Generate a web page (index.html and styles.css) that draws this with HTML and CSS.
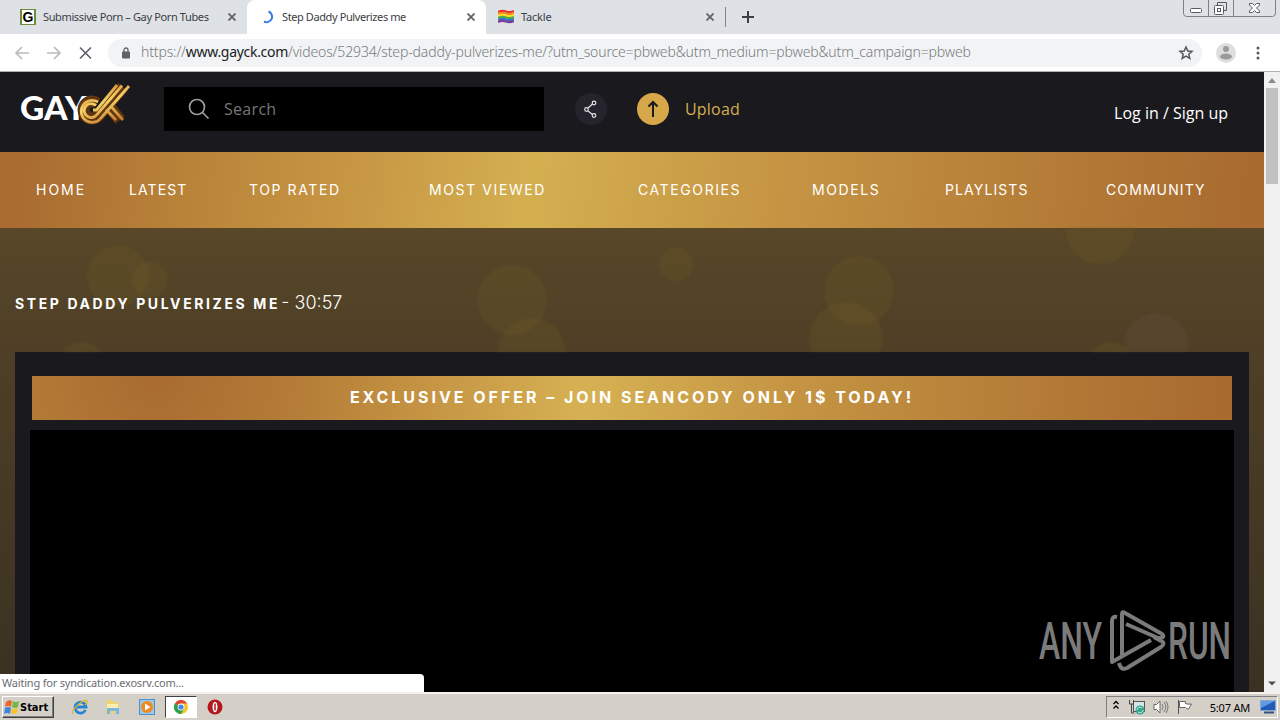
FILE: index.html
```html
<!DOCTYPE html>
<html lang="en">
<head>
    <meta charset="UTF-8">
    <meta name="viewport" content="width=device-width, initial-scale=1.0">
    <title>Step Daddy Pulverizes me</title>
    <link rel="stylesheet" href="styles.css">
</head>
<body>
    <div class="desktop">
        <!-- Tabs -->
        <div class="tabstrip">
            <div class="tab tab-first">
                <svg class="favicon" width="16" height="16" viewBox="0 0 16 16"><rect width="16" height="16" fill="#6f8c3c"/><rect x="2" y="1" width="12" height="14" fill="#fff"/><text x="8" y="13" text-anchor="middle" class="favicon-letter">G</text></svg>
                <span class="tab-title title-one">Submissive Porn – Gay Porn Tubes</span>
                <svg class="tab-close" width="8" height="8" viewBox="0 0 8 8"><path d="M0.5 0.5l7 7M7.5 0.5l-7 7"/></svg>
            </div>
            <div class="tab tab-active">
                <svg class="favicon" width="16" height="16" viewBox="0 0 16 16"><path d="M8.500 2.500A5.500 5.500 0 1 1 4 12.500" fill="none" stroke="#3b78e0" stroke-width="2"/></svg>
                <span class="tab-title title-two">Step Daddy Pulverizes me</span>
                <svg class="tab-close" width="8" height="8" viewBox="0 0 8 8"><path d="M0.5 0.5l7 7M7.5 0.5l-7 7"/></svg>
            </div>
            <div class="tab tab-last">
                <svg class="favicon" width="16" height="16" viewBox="0 0 16 16"><g fill="none" stroke-width="2.2"><path d="M0 3q4-2 8-.5t8-.5" stroke="#e8322c"/><path d="M0 5q4-2 8-.5t8-.5" stroke="#f58a1f"/><path d="M0 7q4-2 8-.5t8-.5" stroke="#f9dc2c"/><path d="M0 9q4-2 8-.5t8-.5" stroke="#4caf3d"/><path d="M0 11q4-2 8-.5t8-.5" stroke="#3a6fd0"/><path d="M0 13q4-2 8-.5t8-.5" stroke="#7a3c98"/></g></svg>
                <span class="tab-title title-three">Tackle</span>
                <svg class="tab-close" width="8" height="8" viewBox="0 0 8 8"><path d="M0.5 0.5l7 7M7.5 0.5l-7 7"/></svg>
            </div>
            <div class="tab-separator"></div>
            <svg class="new-tab" width="12" height="12" viewBox="0 0 12 12"><path d="M6 0v12M0 6h12" stroke="#3c4043" stroke-width="2"/></svg>
            <svg class="window-buttons" width="94" height="18" viewBox="0 0 94 18" fill="none">
                <path d="M.5 0v13q0 3.500 3 3.500h86q3 0 3-3.500V0M25.500 0v16M50.500 0v16" stroke="#7d818b"/>
                <rect x="7.500" y="8.500" width="11" height="4" rx="1" fill="#fff" stroke="#555b66"/>
                <path d="M34.500 5V2.500h9v8H41" stroke="#555b66"/>
                <rect x="31.500" y="5.500" width="9" height="9" rx="1" fill="#fff" stroke="#555b66"/><rect x="34.500" y="8.500" width="3" height="3" stroke="#555b66"/>
                <path d="M66.500 3.500h3l2 2 2-2h3v1.500l-3 3 3 3v1.500h-3l-2-2-2 2h-3v-1.500l3-3-3-3z" fill="#fff" stroke="#555b66"/>
            </svg>
        </div>

        <!-- Address bar -->
        <div class="toolbar">
            <svg class="nav-icon" width="84" height="18" viewBox="0 0 84 18" fill="none" stroke-width="1.700">
                <path d="M15 9H2M8 3L2 9l6 6M33 9h13M40 3l6 6-6 6" stroke="#b9bbbe"/>
                <path d="M66 3.500l11 11M77 3.500l-11 11" stroke="#5f6368"/>
            </svg>
            <div class="omnibox">
                <svg width="8" height="12" viewBox="0 0 8 12"><path d="M2 5V3a2 2 0 0 1 4 0v2" fill="none" stroke="#5f6368" stroke-width="1.300"/><rect y="4.500" width="8" height="7" rx="1" fill="#5f6368"/></svg>
                <span class="url">https://<b>www.gayck.com</b>/videos/52934/step-daddy-pulverizes-me/?utm_source=pbweb&amp;utm_medium=pbweb&amp;utm_campaign=pbweb</span>
                <svg class="star" width="16" height="16" viewBox="0 0 16 16"><path d="M8 2l1.800 4 4.200.4-3.200 2.800 1 4.200L8 11.200l-3.800 2.200 1-4.200L2 6.400 6.200 6z" fill="none" stroke="#54585d" stroke-width="1.500"/></svg>
            </div>
            <svg class="avatar" width="20" height="20" viewBox="0 0 20 20"><circle cx="10" cy="10" r="10" fill="#dedede"/><circle cx="10" cy="6" r="3" fill="#9a9a9a"/><ellipse cx="10" cy="13.500" rx="6" ry="3" fill="#9a9a9a"/></svg>
            <svg class="kebab" width="4" height="14" viewBox="0 0 4 14" fill="#54585d"><circle cx="2" cy="2" r="1.500"/><circle cx="2" cy="7" r="1.500"/><circle cx="2" cy="12" r="1.500"/></svg>
        </div>

        <div class="viewport">
            <div class="page">
                <header class="header">
                    <svg class="logo" width="112" height="42" viewBox="0 0 112 42">
                        <defs>
                            <linearGradient id="gold" gradientUnits="userSpaceOnUse" x1="80" y1="0" x2="95" y2="40">
                                <stop offset="0" stop-color="#c8782a"/>
                                <stop offset=".45" stop-color="#f6d267"/>
                                <stop offset="1" stop-color="#c5762a"/>
                            </linearGradient>
                        </defs>
                        <text x="0" y="37" textLength="67" lengthAdjust="spacingAndGlyphs" class="logo-text">GAY</text>
                        <g fill="none" stroke="#5f3411" stroke-width="12">
                            <path d="M78 33a8.500 8.500 0 1 1-1-13M78 33L103 4M88 22l12 15"/>
                        </g>
                        <g fill="none" stroke="url(#gold)" stroke-width="2.800">
                            <path d="M78 19A11 11 0 1 0 81 35L109 3"/>
                            <path d="M76 22.500A7 7 0 1 0 77 31.500L102 2.500"/>
                            <path d="M73 27h3.500L97 2"/>
                            <path d="M91 23.500L103 37M86 26.500L96 37"/>
                        </g>
                    </svg>
                    <div class="search">
                        <svg width="22" height="22" viewBox="0 0 22 22" fill="none" stroke="#9c9c9c" stroke-width="1.700"><circle cx="9" cy="9" r="7.500"/><path d="M14.500 14.500L20.500 20.500"/></svg>
                        <span>Search</span>
                    </div>
                    <svg class="share" width="32" height="32" viewBox="0 0 32 32"><circle cx="16" cy="16" r="16" fill="#25242d"/><g fill="none" stroke="#e4e4e6" stroke-width="1.200"><path d="M13 15l4.500-4M13 18l4.500 3.500"/><circle cx="11.500" cy="16.500" r="1.800"/><circle cx="19" cy="10" r="1.800"/><circle cx="19" cy="22.500" r="1.800"/></g></svg>
                    <a class="upload">
                        <svg width="32" height="32" viewBox="0 0 32 32"><circle cx="16" cy="16" r="16" fill="#d6a849"/><path d="M16 24V9M11.500 13.500L16 9l4.500 4.500" fill="none" stroke="#1b1a1e" stroke-width="2"/></svg>
                        <span>Upload</span>
                    </a>
                    <a class="login">Log in / Sign up</a>
                </header>

                <nav class="menu">
                    <a class="menu-home">HOME</a>
                    <a>LATEST</a>
                    <a class="menu-wide">TOP RATED</a>
                    <a class="menu-wide">MOST VIEWED</a>
                    <a class="menu-wide">CATEGORIES</a>
                    <a class="menu-wide">MODELS</a>
                    <a>PLAYLISTS</a>
                    <a>COMMUNITY</a>
                </nav>

                <main class="content">
                    <svg class="bokeh" width="1264" height="124" viewBox="0 0 1264 124">
                        <g fill="#6b5824" fill-opacity=".32">
                            <circle cx="118" cy="48" r="31"/><circle cx="150" cy="52" r="18"/>
                            <circle cx="512" cy="72" r="35"/><circle cx="532" cy="124" r="34"/>
                            <circle cx="676" cy="36" r="17"/><circle cx="859" cy="63" r="35"/>
                            <circle cx="846" cy="111" r="37"/><circle cx="1100" cy="2" r="34"/>
                            <circle cx="82" cy="138" r="24"/><circle cx="1110" cy="136" r="22"/>
                        </g>
                        <circle cx="1156" cy="118" r="33" fill="#68513a" fill-opacity=".3"/>
                    </svg>
                    <h1 class="video-title"><strong>STEP DADDY PULVERIZES ME</strong> <span class="duration">- 30:57</span></h1>
                    <div class="player-box">
                        <a class="offer"><span>EXCLUSIVE OFFER – JOIN SEANCODY ONLY 1$ TODAY!</span></a>
                        <div class="video"></div>
                    </div>
                </main>

                <div class="status">Waiting for syndication.exosrv.com...</div>
                <svg class="watermark" width="196" height="64" viewBox="0 0 196 64">
                    <g class="watermark-text">
                        <text x="1" y="50" textLength="63" lengthAdjust="spacingAndGlyphs">ANY</text>
                        <text x="130" y="50" textLength="63" lengthAdjust="spacingAndGlyphs">RUN</text>
                    </g>
                    <g fill="none" stroke="#7b7b7b" stroke-width="4" stroke-linejoin="round">
                        <path d="M79 8q-5-1-5 4v41l39-22"/>
                        <path d="M84 46V5q0-3 3-1l37 21q3 3-1 4h-3L88 15"/>
                        <path d="M81 54q2 8 8 5l34-21q5-4 0-6l-7-4"/>
                    </g>
                </svg>
            </div>
            <div class="scrollbar">
                <svg width="16" height="16" viewBox="0 0 16 16"><path d="M4 11l4-5 4 5z" fill="#8c8c8c"/></svg>
                <div class="thumb"></div>
                <svg class="scroll-down" width="16" height="16" viewBox="0 0 16 16"><path d="M4 5.500l4 4 4-4z" fill="#505050"/></svg>
            </div>
        </div>

        <!-- Taskbar -->
        <div class="taskbar">
            <div class="start">
                <svg width="16" height="16" viewBox="0 0 16 16"><path d="M2 3q3-3 6-1L7 8Q4 6 1 8z" fill="#e8682a"/><path d="M9 2q3 2 6 0l-1 6q-3 2-6 0z" fill="#75b843"/><path d="M1 9q3-2 6 0l-1 6q-3-2-6 0z" fill="#3f86d8"/><path d="M8 9q3 2 6 0l-1 5q-3 2-6 0z" fill="#f6c52c"/></svg>
                <span>Start</span>
            </div>
            <div class="launch">
                <svg width="16" height="16" viewBox="0 0 16 16" fill="none"><path d="M13.500 11A5.500 5.500 0 1 1 14 8H4" stroke="#2585d3" stroke-width="2.800"/><path d="M1 15Q-1 12 6 6t9-4q1 2-2 4" stroke="#e4b62c" stroke-width="1.300"/></svg>
            </div>
            <div class="launch">
                <svg width="16" height="16" viewBox="0 0 16 16"><path d="M1 3l1-2h5l1 2h6v11H1z" fill="#efd277"/><path d="M2 5h11v6H2z" fill="#fbedb0"/><path d="M2 15V9h12v6h-3v-3H5v3z" fill="#78b8df"/></svg>
            </div>
            <div class="launch">
                <svg width="16" height="16" viewBox="0 0 16 16"><rect x=".5" y=".5" width="15" height="15" fill="#9bc9ee" stroke="#4c8fc9"/><circle cx="8" cy="8" r="6" fill="#f08a1d"/><path d="M6 4.500v7L11.500 8z" fill="#fff"/></svg>
            </div>
            <div class="launch launch-active">
                <svg width="14" height="14" viewBox="0 0 14 14"><circle cx="7" cy="7" r="7" fill="#f8c722"/><path d="M7 7L.9 3.500A7 7 0 0 1 13.100 3.500H7z" fill="#dd4436"/><path d="M7 7L.9 3.500A7 7 0 0 0 7 14l3-5z" fill="#2aa052"/><circle cx="7" cy="7" r="3.400" fill="#fff"/><circle cx="7" cy="7" r="2.600" fill="#4583ed"/></svg>
            </div>
            <div class="launch">
                <svg width="16" height="16" viewBox="0 0 16 16"><circle cx="8" cy="8" r="7.500" fill="#b3161b"/><ellipse cx="8" cy="8" rx="2.500" ry="5.300" fill="#fff"/><path d="M8 4.500v7" stroke="#b3161b" stroke-width="1.500"/></svg>
            </div>
            <div class="tray">
                <svg class="chevrons" width="8" height="10" viewBox="0 0 8 10"><path d="M1.500 4L4 1.500 6.500 4M1.500 8.500L4 6l2.500 2.500" fill="none" stroke="#000" stroke-width="1.300"/></svg>
                <svg class="tray-network" width="16" height="16" viewBox="0 0 16 16"><rect x="4.500" y="2.500" width="11" height="10" fill="#d5e4e4" stroke="#555"/><path d="M.5 1v4h4V1M2.500 5v9h3" fill="none" stroke="#444"/><circle cx="11" cy="11" r="4.500" fill="#37a58c"/><path d="M8 11a3 3 0 0 1 5-2M14 11a3 3 0 0 1-5 2" fill="none" stroke="#c8f0e4"/></svg>
                <svg class="tray-sound" width="16" height="16" viewBox="0 0 16 16"><path d="M1 5.500h2.500L7 2v12l-3.500-3.500H1z" fill="#fff" stroke="#666"/><path d="M9 5q2 3 0 6M11 3q3.500 5 0 10M13 2q4 6 0 12" fill="none" stroke="#777"/></svg>
                <svg class="tray-flag" width="16" height="16" viewBox="0 0 16 16"><path d="M2.500 2.500h6v2q2 1 6 .5l-3 5q-2 0-3-1.500h-6z" fill="#fff" stroke="#666"/><path d="M1.500 1v14" stroke="#555"/></svg>
                <span class="clock">5:07 AM</span>
                <svg class="tray-desktop" width="16" height="14" viewBox="0 0 16 14"><rect x=".5" y=".5" width="15" height="10" fill="#235ab8" stroke="#8ba8cf"/><path d="M1 1h14L1 8z" fill="#5f99e2"/><path d="M4 12.500h10" stroke="#38507c" stroke-width="2"/></svg>
            </div>
        </div>
    </div>
</body>
</html>
```
FILE: styles.css
```css
* {
    margin: 0;
    padding: 0;
    box-sizing: border-box;
}

body {
    font-family: 'Open Sans', sans-serif;
    background: #000;
    overflow: hidden;
}

svg {
    display: block;
    flex-shrink: 0;
}

.desktop {
    width: 1280px;
    height: 720px;
    display: flex;
    flex-direction: column;
    white-space: nowrap;
}

/* Browser tabs */
.tabstrip {
    height: 34px;
    background: #dee1e6;
    display: flex;
    align-items: center;
}

.tab {
    height: 34px;
    display: flex;
    align-items: center;
    font-family: 'Noto Sans', sans-serif;
    font-size: 11px;
    color: #3c4043;
}

.tab-first {
    width: 247px;
    padding: 0 11px 0 20px;
}

.tab-active {
    width: 239px;
    padding: 0 11px 0 13px;
    background: #fff;
    border-radius: 8px 8px 0 0;
}

.tab-last {
    width: 239px;
    padding: 0 11px 0 12px;
}

.tab-title {
    margin-top: -2px;
    margin-left: 7px;
}

.title-one {
    letter-spacing: -0.37px;
}

.title-two {
    margin-left: 6px;
    letter-spacing: -0.4px;
}

.title-three {
    letter-spacing: -0.2px;
}

.tab-close {
    margin-left: auto;
    fill: none;
    stroke: #5f6368;
    stroke-width: 1.8;
}

.favicon-letter {
    font: bold 14px 'Liberation Sans', sans-serif;
}

.tab-separator {
    width: 1px;
    height: 20px;
    background: #808489;
}

.new-tab {
    margin-left: 16px;
}

.window-buttons {
    margin-left: auto;
    margin-right: 3px;
    align-self: flex-start;
}

/* Address bar */
.toolbar {
    height: 38px;
    background: #fff;
    border-bottom: 1px solid #b0b0b0;
    display: flex;
    align-items: center;
    padding: 0 20px 0 14px;
}

.omnibox {
    width: 1094px;
    height: 28px;
    margin-left: 10px;
    padding: 0 8px 0 14px;
    border-radius: 14px;
    background: #f1f3f4;
    display: flex;
    align-items: center;
}

.url {
    margin-top: -2px;
    margin-left: 11px;
    font-family: 'Noto Sans', sans-serif;
    font-size: 14px;
    font-weight: 300;
    letter-spacing: -0.14px;
    color: #777b80;
}

.url b {
    font-weight: 400;
    letter-spacing: -0.3px;
    color: #202124;
}

.star {
    margin-left: auto;
}

.avatar {
    margin-left: 14px;
}

.kebab {
    margin-left: auto;
}

/* Page */
.viewport {
    height: 620px;
    display: flex;
}

.page {
    position: relative;
    width: 1264px;
    height: 620px;
    overflow: hidden;
}

.header {
    height: 80px;
    background: #1a191e;
    display: flex;
    align-items: center;
    padding: 0 36px 6px 20px;
}

.logo {
    margin-top: -10px;
    overflow: visible;
}

.logo-text {
    font: 900 33px 'Lato', sans-serif;
    fill: #fff;
}

.search {
    width: 380px;
    height: 44px;
    margin-left: 32px;
    padding-left: 24px;
    background: #000;
    display: flex;
    align-items: center;
    gap: 14px;
    font-size: 16px;
    letter-spacing: 0.3px;
    color: #777;
}

.share {
    margin-left: 31px;
}

.upload {
    margin-left: 30px;
    display: flex;
    align-items: center;
    gap: 16px;
    font-size: 16px;
    letter-spacing: 0.2px;
    color: #d4af50;
}

.login {
    margin-left: auto;
    padding-top: 8px;
    font-size: 16px;
    color: #fff;
}

.menu {
    height: 76px;
    display: grid;
    grid-template-columns: 93px 120px 180px 209px 174px 133px 161px 1fr;
    align-items: center;
    padding: 0 0 2px 36px;
    background: linear-gradient(97deg, #aa6c31 0%, #aa6c31 2%, #b98339 15%, #c69543 27%, #d4af50 42%, #c59443 62%, #b47c37 83%, #a96b30 98%);
    font-family: 'Inter', sans-serif;
    font-size: 14px;
    letter-spacing: 1.1px;
    color: #fff;
}

.menu-wide {
    letter-spacing: 1.6px;
}

.menu-home {
    letter-spacing: 2px;
}

.content {
    position: relative;
    height: 464px;
    padding: 0 15px;
    background: linear-gradient(#584728, #4e3f26 27%, #3b3122);
}

.bokeh {
    position: absolute;
    left: 0;
    top: 0;
    filter: blur(1px);
}

.video-title {
    position: relative;
    height: 124px;
    padding-top: 63px;
    font-family: 'Inter', sans-serif;
    font-size: 14px;
    line-height: 24px;
    color: #fff;
}

.video-title strong {
    font-weight: 700;
    letter-spacing: 2.6px;
}

.duration {
    margin-left: -2px;
    font-size: 18px;
    font-weight: 300;
}

.player-box {
    width: 1234px;
    height: 340px;
    padding: 24px 15px 0;
    background: #1a191e;
}

.offer {
    height: 44px;
    margin: 0 2px 10px;
    padding-bottom: 2px;
    display: flex;
    align-items: center;
    justify-content: center;
    background: radial-gradient(circle at 123px 0, #a96b30 0, #b47c37 140px, #c59443 270px, #d6b153 430px, #c59443 640px, #b47c37 880px, #a96b30 1060px);
    font-family: 'Inter', sans-serif;
    font-size: 16px;
    font-weight: 700;
    letter-spacing: 2.97px;
    color: #fff;
}

.video {
    height: 262px;
    background: #000;
}

.status {
    position: absolute;
    left: 0;
    bottom: 0;
    width: 424px;
    height: 18px;
    padding-left: 2px;
    background: #fff;
    border-top-right-radius: 4px;
    font-family: 'Noto Sans', sans-serif;
    font-size: 11px;
    letter-spacing: -0.2px;
    line-height: 18px;
    color: #6a6d71;
}

.watermark {
    position: absolute;
    left: 1038px;
    top: 537px;
    overflow: visible;
}

.watermark-text {
    font: 500 51px 'Roboto', sans-serif;
    fill: #7b7b7b;
}

/* Scrollbar */
.scrollbar {
    width: 16px;
    background: #f1f1f1;
    display: flex;
    flex-direction: column;
}

.thumb {
    width: 12px;
    height: 96px;
    margin-left: 2px;
    background: #c1c1c1;
}

.scroll-down {
    margin-top: auto;
}

/* Taskbar */
.taskbar {
    height: 28px;
    background: #d4d0c8;
    box-shadow: inset 0 2px #f4f2ee;
    display: flex;
    align-items: center;
    padding: 2px 2px 0;
}

.start {
    width: 52px;
    height: 22px;
    margin-right: 9px;
    padding-left: 1px;
    border: 1px solid;
    border-color: #fff #404040 #404040 #fff;
    box-shadow: inset -1px -1px #808080;
    display: flex;
    align-items: center;
    font-family: 'DejaVu Sans Condensed', 'DejaVu Sans', sans-serif;
    font-size: 11px;
    font-weight: 700;
}

.launch {
    width: 33.6px;
    height: 22px;
    display: flex;
    align-items: center;
    justify-content: center;
}

.launch-active {
    width: 32px;
    margin: 0 1px;
    background: #fff;
    border: 1px solid;
    border-color: #404040 #fff #fff #404040;
}

.tray {
    width: 172px;
    height: 22px;
    margin-left: auto;
    padding: 0 1px 0 5px;
    border: 1px solid;
    border-color: #808080 #fff #fff #808080;
    display: flex;
    align-items: center;
}

.chevrons {
    margin-top: -4px;
}

.tray-network {
    margin-left: 9px;
}

.tray-sound,
.tray-flag {
    margin-left: 8px;
}

.clock {
    margin-left: auto;
    margin-right: 10px;
    font-family: 'Noto Sans', sans-serif;
    font-size: 11px;
    letter-spacing: -0.2px;
}
```
